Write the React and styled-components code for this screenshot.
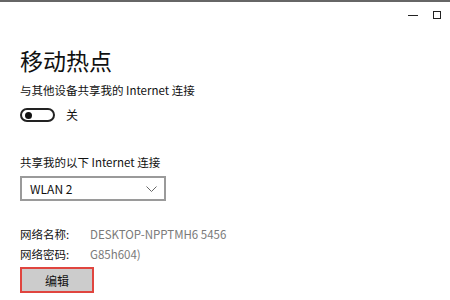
import React from "react";
import styled, { createGlobalStyle } from "styled-components";

const Global = createGlobalStyle`
  html, body { margin: 0; padding: 0; background: #fff; }
  body { font-family: "Noto Sans CJK SC", sans-serif; }
`;

const Window = styled.div`
  width: 450px;
  height: 300px;
  box-sizing: border-box;
  border-top: 2px solid #666;
  background: #fff;
  overflow: hidden;
`;

const TitleBar = styled.div`
  height: 26px;
  display: flex;
  justify-content: flex-end;
  align-items: center;
  padding-right: 4px;
`;

const CtrlBtn = styled.div`
  width: ${(p) => p.$w}px;
  height: 20px;
  display: flex;
  align-items: center;
  justify-content: center;
`;

const MinLine = styled.span`
  width: 10px;
  height: 1px;
  background: #222;
`;

const MaxBox = styled.span`
  width: 8px;
  height: 8px;
  box-sizing: border-box;
  border: 1px solid #222;
`;

const Content = styled.div`
  padding: 0 20px;
  display: flex;
  flex-direction: column;
  align-items: flex-start;
`;

const Title = styled.h1`
  margin: 16px 0 0;
  font-weight: 400;
  font-size: 23px;
  line-height: 32px;
  color: #111;
`;

const Label = styled.div`
  margin-top: ${(p) => p.$mt}px;
  font-size: 11.5px;
  line-height: 20px;
  color: #111;
`;

const ToggleRow = styled.div`
  margin-top: 7px;
  display: flex;
  align-items: center;
  gap: 11px;
`;

const Toggle = styled.div`
  width: 35px;
  height: 14px;
  box-sizing: border-box;
  border: 2px solid #222;
  border-radius: 7px;
  display: flex;
  align-items: center;
  padding-left: 3px;
`;

const Knob = styled.span`
  width: 7px;
  height: 7px;
  border-radius: 50%;
  background: #111;
`;

const ToggleText = styled.span`
  font-size: 12px;
  line-height: 16px;
  color: #111;
`;

const Select = styled.div`
  margin-top: 4px;
  width: 146px;
  height: 25px;
  box-sizing: border-box;
  border: 2px solid #9a9a9a;
  display: flex;
  align-items: center;
  justify-content: space-between;
  padding: 0 7px 0 8px;
  font-size: 12px;
  color: #111;
`;

const InfoRow = styled.div`
  margin-top: ${(p) => p.$mt}px;
  display: flex;
  font-size: 11.5px;
  line-height: 20px;
`;

const InfoKey = styled.span`
  width: 70px;
  color: #111;
`;

const InfoVal = styled.span`
  color: #7a7a7a;
`;

const EditButton = styled.button`
  margin-top: 3px;
  width: 74px;
  height: 26px;
  box-sizing: border-box;
  border: 2px solid #e0453f;
  background: #cccccc;
  font-family: "Noto Sans CJK SC", sans-serif;
  font-size: 12px;
  color: #111;
  padding: 0;
  display: flex;
  align-items: center;
  justify-content: center;
`;

export default function App() {
  return (
    <>
      <Global />
      <Window>
        <TitleBar>
          <CtrlBtn $w={30}>
            <MinLine />
          </CtrlBtn>
          <CtrlBtn $w={18}>
            <MaxBox />
          </CtrlBtn>
        </TitleBar>
        <Content>
          <Title>移动热点</Title>
          <Label $mt={4}>与其他设备共享我的 Internet 连接</Label>
          <ToggleRow>
            <Toggle>
              <Knob />
            </Toggle>
            <ToggleText>关</ToggleText>
          </ToggleRow>
          <Label $mt={29}>共享我的以下 Internet 连接</Label>
          <Select>
            <span>WLAN 2</span>
            <svg width="11" height="6" viewBox="0 0 11 6">
              <polyline points="0.5,0.5 5.5,5.5 10.5,0.5" fill="none" stroke="#666" strokeWidth="1" />
            </svg>
          </Select>
          <InfoRow $mt={23}>
            <InfoKey>网络名称:</InfoKey>
            <InfoVal>DESKTOP-NPPTMH6 5456</InfoVal>
          </InfoRow>
          <InfoRow $mt={0}>
            <InfoKey>网络密码:</InfoKey>
            <InfoVal>G85h604)</InfoVal>
          </InfoRow>
          <EditButton>编辑</EditButton>
        </Content>
      </Window>
    </>
  );
}
